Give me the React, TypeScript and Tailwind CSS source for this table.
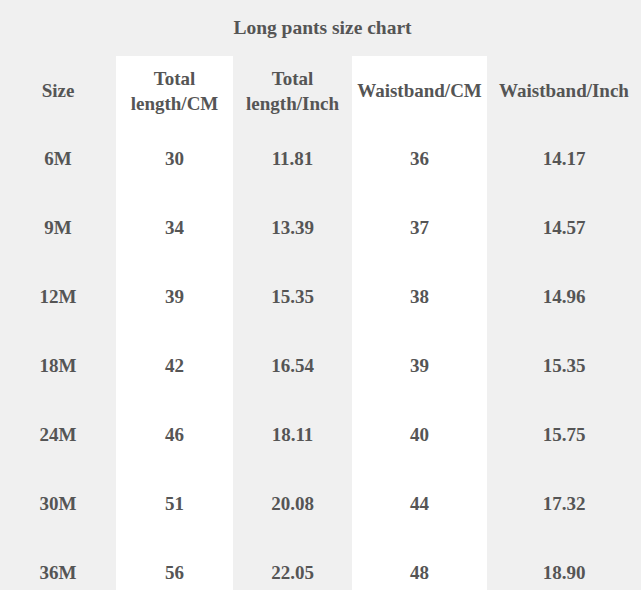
const header = ["Size", "Total\nlength/CM", "Total\nlength/Inch", "Waistband/CM", "Waistband/Inch"];

const rows = [
  ["6M", "30", "11.81", "36", "14.17"],
  ["9M", "34", "13.39", "37", "14.57"],
  ["12M", "39", "15.35", "38", "14.96"],
  ["18M", "42", "16.54", "39", "15.35"],
  ["24M", "46", "18.11", "40", "15.75"],
  ["30M", "51", "20.08", "44", "17.32"],
  ["36M", "56", "22.05", "48", "18.90"],
];

// white background on the CM columns
const white = [false, true, false, true, false];

export default function App() {
  return (
    <div className="w-[641px] h-[590px] overflow-hidden bg-[#f0f0f0] text-[#555555] font-bold text-[19px] font-['Liberation_Serif']">
      <div className="h-[56px] flex items-center justify-center pl-[4px] text-[19.5px]">Long pants size chart</div>
      <div className="grid grid-cols-[116px_117px_119px_135px_154px]">
        {header.map((h, i) => (
          <div
            key={h}
            className={`h-[69px] flex flex-col items-center justify-center text-center leading-[25px] whitespace-nowrap ${white[i] ? "bg-white" : ""}`}
          >
            {h.split("\n").map((line) => (
              <span key={line}>{line}</span>
            ))}
          </div>
        ))}
        {rows.map((r) =>
          r.map((c, i) => (
            <div
              key={r[0] + i}
              className={`h-[69px] flex items-center justify-center ${white[i] ? "bg-white" : ""}`}
            >
              {c}
            </div>
          ))
        )}
      </div>
    </div>
  );
}
